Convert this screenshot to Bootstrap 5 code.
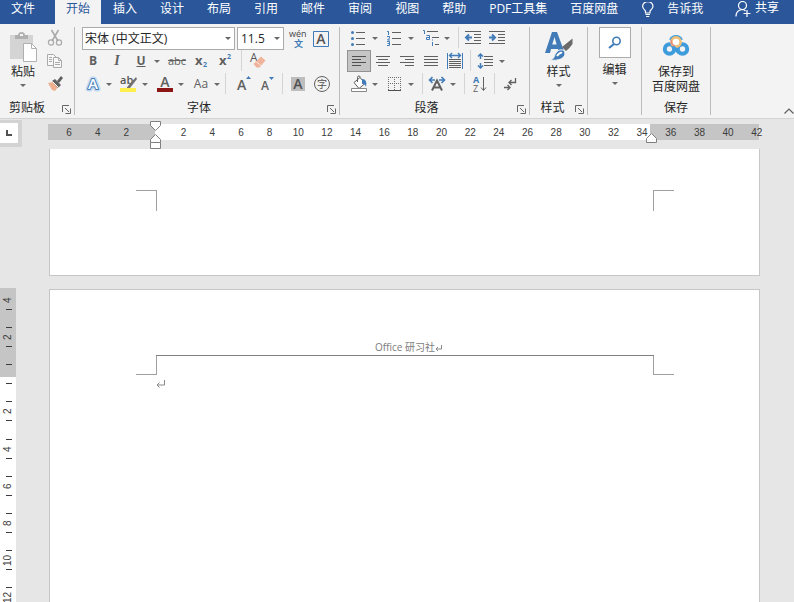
<!DOCTYPE html>
<html lang="zh-CN">
<head>
<meta charset="utf-8">
<meta name="viewport" content="width=device-width, initial-scale=1">
<title>Office 研习社</title>
<link href="https://cdn.jsdelivr.net/npm/bootstrap@5.3.0/dist/css/bootstrap.min.css" rel="stylesheet">
<style>
  :root { --ink:#606060; --blue:#2b579a; --accent:#417cb8; --line:#c6c6c6; }
  body { font-family:"Open Sans","Noto Sans CJK SC",sans-serif; font-size:12px; line-height:14px; color:#262626; background:#e6e6e6; }
  button { border:0; padding:0; background:none; color:inherit; }
  svg { display:block; flex:none; }
  .tabs { background:var(--blue); height:24px; }
  .tabs .nav-link { color:#fff; padding:2px 11px 8px; font-size:12px; line-height:14px; border-radius:0; }
  .tabs .nav-link.active { background:#f3f3f3; color:var(--blue); }
  .tabs .nav { gap:1px; }
  .tabs .first-tab { margin-right:8px; }
  .share { padding:1px 15px 9px 0; }
  .ribbon { background:#f3f3f3; height:95px; padding-top:3px; border-bottom:1px solid #d2d2d2; }
  .grp { height:88px; border-right:1px solid #bcbcbc; }
  .w-clip { width:75px; } .w-font { width:265px; } .w-para { width:190px; } .w-style { width:58px; } .w-edit { width:54px; } .w-save { width:69px; }
  .grp-foot { height:19px; }
  .launch { margin-right:3px; padding-bottom:1px; }
  .rows { padding-left:7px; }
  .w-font .rows { padding-left:6px; }
  .trow { height:23px; }
  .combos { padding-left:1px; }
  .tb { width:24px; height:22px; display:flex; align-items:center; justify-content:center; color:var(--ink); font-size:12px; line-height:20px; }
  .tb.on { background:#c5c5c5; outline:1px solid #929292; outline-offset:-1px; }
  .tb.ital { font-family:"Liberation Serif",serif; font-size:14px; }
  .tb.strike { font-size:11px; }
  .dd { width:8px; height:22px; display:flex; align-items:center; justify-content:center; }
  .dd::after, .tall .arrow { content:""; border:3px solid transparent; border-top-color:#6a6a6a; border-bottom:0; }
  .g4 { margin-right:4px; }
  .tsep { width:1px; height:21px; background:#d4d4d4; margin:0 2px 0 7px; }
  .tsep.tight { margin:0 3px; }
  .tsep.mid { margin:0 5px 0 4px; }
  .form-select.combo { height:23px; border:1px solid #ababab; border-radius:0; padding:0 14px 0 2px; font-size:12px; line-height:20px; color:#262626; background-color:#fff; background-position:right 3px center; background-size:6px 3px;
    background-image:url("data:image/svg+xml,%3csvg xmlns='http://www.w3.org/2000/svg' viewBox='0 0 6 3'%3e%3cpath fill='%23666' d='M0 0h6L3 3z'/%3e%3c/svg%3e"); }
  .form-select.face { width:153px; }
  .form-select.points { width:47px; margin-left:2px; padding-left:3px; }
  .tall { display:flex; flex-direction:column; align-items:center; line-height:15px; }
  .tall .arrow { margin-top:5px; }
  .paste { padding-left:9px; margin-right:7px; }
  .find-box { width:32px; height:31px; background:#fff; border:1px solid #ababab; display:flex; align-items:center; justify-content:center; }
  .ruler-row { height:30px; padding:5px 35px 0 0; }
  .tabstop { width:22px; height:27px; margin-right:26px; margin-top:-4px; background:#fff; border:4px solid #d3d3d3; border-left:0; border-top-width:3px; }
  .hruler { height:16px; padding:0 2px 0 21px; background:linear-gradient(90deg,#c5c5c5 15%,#fff 15% 84.7%,#c5c5c5 84.7%); font:10px/17px "Liberation Sans",sans-serif; color:#3c3c3c; }
  .hruler > span { width:0; display:flex; justify-content:center; }
  .mk { position:absolute; top:-3px; }
  .mk-l { left:calc(15% - 5px); }
  .mk-r { left:calc(84.7% - 4px); }
  .vruler { width:16px; margin-top:139px; margin-right:33px; padding:12px 0 5px; background:linear-gradient(#c5c5c5 28.3%,#fff 28.3%); font:10px/10px "Liberation Sans",sans-serif; color:#3c3c3c; }
  .vruler > span { height:0; display:flex; flex-direction:column; align-items:center; justify-content:center; }
  .vruler > span::before, .vruler > span::after { content:""; width:6px; height:1px; margin-left:2px; background:#3c3c3c; flex:none; }
  .vruler > span:first-child::before { background:none; }
  .vruler b { height:18px; font-weight:400; writing-mode:vertical-rl; transform:rotate(180deg); text-align:center; flex:none; line-height:12px; }
  .pages { margin-right:34px; }
  .sheet { background:#fff; border:1px solid var(--line); padding:0 85px 0 86px; }
  .sheet.one { border-top:0; height:127px; padding-top:41px; margin-bottom:13px; }
  .sheet.two { border-bottom:0; padding-top:50px; }
  .corner { width:21px; height:21px; border:0 solid #a0a0a0; }
  .sheet.two .corner { height:19px; }
  .c-tl { border-width:1px 1px 0 0; } .c-tr { border-width:1px 0 0 1px; }
  .c-bl { border-width:0 1px 1px 0; } .c-br { border-width:0 0 1px 1px; }
  .pghead { margin:0 20px; padding-left:7px; border-bottom:1px solid #808080; height:16px; font-size:10px; line-height:14px; color:#7c7c7c; }
  .para { padding:2px 0 0 20px; }
</style>
<script src="https://cdn.jsdelivr.net/npm/bootstrap@5.3.0/dist/js/bootstrap.bundle.min.js"></script>
</head>
<body class="vh-100 overflow-hidden d-flex flex-column">

<header class="tabs d-flex align-items-start flex-shrink-0">
  <nav class="nav flex-nowrap text-nowrap">
    <a class="nav-link first-tab" href="#">文件</a>
    <a class="nav-link active" href="#" aria-current="page">开始</a>
    <a class="nav-link" href="#">插入</a>
    <a class="nav-link" href="#">设计</a>
    <a class="nav-link" href="#">布局</a>
    <a class="nav-link" href="#">引用</a>
    <a class="nav-link" href="#">邮件</a>
    <a class="nav-link" href="#">审阅</a>
    <a class="nav-link" href="#">视图</a>
    <a class="nav-link" href="#">帮助</a>
    <a class="nav-link" href="#">PDF工具集</a>
    <a class="nav-link" href="#">百度网盘</a>
    <a class="nav-link d-flex" href="#">
      <svg width="14" height="18" viewBox="0 0 14 18" fill="none" stroke="#fff" stroke-width="1.200"><path d="M4.500 11V9C3 7.500 1.600 6.500 1.600 4.300a5.200 4.700 0 0 1 10.400 0c0 2.200-1.500 3.200-3 4.700v2zM4.500 12.500h4.500M5.200 14.500h3"/></svg>
      <span class="ms-2 ps-1">告诉我</span>
    </a>
  </nav>
  <button type="button" class="share ms-auto d-flex text-white text-nowrap">
    <svg width="16" height="16" viewBox="0 0 16 16" fill="none" stroke="#fff" stroke-width="1.200" class="me-1"><circle cx="7.500" cy="4.500" r="4"/><path d="M1 15.500c0-4 2.500-6.500 6-7 1.500 0 2.500.5 3.500 1.500M12 9v7M8.500 12.500h7"/></svg>
    <span>共享</span>
  </button>
</header>

<section class="ribbon d-flex flex-shrink-0" aria-label="开始">
  <div class="grp w-clip d-flex flex-column">
    <div class="d-flex flex-grow-1">
      <button type="button" class="tall paste pt-1">
        <svg width="28" height="33" viewBox="0 0 28 33"><path d="M1 4h23v24H1z" fill="#d4d4d4"/><path d="M6 8V4h3c0-4 7-4 7 0h3v4z" fill="#b0b0b0"/><path d="M11 3h3v2h-3z" fill="#f3f3f3"/><path d="M14.500 12.500h8l5 5V30.500h-13z" fill="#fff" stroke="#b0b0b0"/><path d="M22.500 12.500v5h5" fill="none" stroke="#b0b0b0"/></svg>
        <span>粘贴</span><span class="arrow"></span>
      </button>
      <div>
        <div class="trow"><button type="button" class="tb" aria-label="剪切"><svg width="24" height="22" viewBox="0 0 24 22" fill="none" stroke="#aaa" stroke-width="1.600"><path d="M7.500 3l6.500 11M14.500 3L8 14"/><circle cx="7" cy="15.500" r="2.600" stroke-width="1.200"/><circle cx="15" cy="15.500" r="2.600" stroke-width="1.200"/></svg></button></div>
        <div class="trow"><button type="button" class="tb" aria-label="复制"><svg width="24" height="22" viewBox="0 0 24 22" fill="#f8f8f8" stroke="#aaa"><path d="M3.500 4.500h6l3 3v8h-9zM5 7.500h3M5 9.500h3M5 11.500h3"/><path d="M9.500 7.500h5l3 3v7h-8zM14.500 7.500v3h3M11 12.500h5M11 14.500h5"/></svg></button></div>
        <div class="trow"><button type="button" class="tb" aria-label="格式刷"><svg width="24" height="22" viewBox="0 0 24 22"><path d="M4 10l5-1 5 5-3 4-3-1z" fill="#efaf91"/><path d="M8 8l3-2 6 6-3 3z" fill="#606060"/><path d="M13 8l4-5 2 2-4 5z" fill="#606060"/><path d="M8.500 8.500l6 6" stroke="#fff"/></svg></button></div>
      </div>
    </div>
    <div class="grp-foot d-flex align-items-end"><span class="flex-grow-1 text-center pe-2">剪贴板</span>
      <button type="button" class="launch" aria-label="剪贴板选项"><svg width="9" height="9" viewBox="0 0 9 9" fill="none" stroke="#666"><path d="M.5 7V.5H7M3 3l4 4M8.500 3.500v5h-5"/></svg></button></div>
  </div>

  <div class="grp w-font d-flex flex-column">
    <div class="rows">
      <div class="trow combos d-flex align-items-center">
        <select class="form-select combo face" aria-label="字体"><option>宋体 (中文正文)</option></select>
        <select class="form-select combo points" aria-label="字号"><option>11.5</option></select>
        <button type="button" class="tb" aria-label="拼音指南"><svg width="24" height="22" viewBox="0 0 24 22"><text x="5" y="9" font-size="9" font-family="Open Sans" fill="#444">wén</text><text x="10" y="19" font-size="9" font-family="Noto Sans CJK SC" font-weight="700" fill="#417cb8">文</text></svg></button>
        <button type="button" class="tb" aria-label="字符边框"><svg width="24" height="22" viewBox="0 0 24 22"><path d="M5.500 3.500h15v15h-15z" fill="none" stroke="#417cb8"/><text x="13" y="16" text-anchor="middle" font-size="14" font-weight="600" font-family="Open Sans" fill="#555">A</text></svg></button>
      </div>
      <div class="trow d-flex">
        <button type="button" class="tb fw-bold">B</button>
        <button type="button" class="tb ital fst-italic fw-bold">I</button>
        <button type="button" class="tb fw-bold text-decoration-underline">U</button><button type="button" class="dd g4" aria-label="下划线类型"></button>
        <button type="button" class="tb strike text-decoration-line-through">abc</button>
        <button type="button" class="tb" aria-label="下标"><svg width="24" height="22" viewBox="0 0 24 22" font-family="Open Sans" font-weight="700"><text x="6" y="15" font-size="13" fill="#606060">x</text><text x="14" y="17" font-size="7" fill="#417cb8">2</text></svg></button>
        <button type="button" class="tb" aria-label="上标"><svg width="24" height="22" viewBox="0 0 24 22" font-family="Open Sans" font-weight="700"><text x="6" y="15" font-size="13" fill="#606060">x</text><text x="14" y="9" font-size="7" fill="#417cb8">2</text></svg></button>
        <span class="tsep mid"></span>
        <button type="button" class="tb" aria-label="清除格式"><svg width="24" height="22" viewBox="0 0 24 22"><text x="3" y="12" font-size="12" font-family="Open Sans" fill="#555">A</text><path d="M14 6.500l4.500 4-6 7h-3L6.500 14z" fill="#f0b39a"/><path d="M9 11.500l5 4" stroke="#fbe3d8"/></svg></button>
      </div>
      <div class="trow d-flex">
        <button type="button" class="tb" aria-label="文本效果"><svg width="24" height="22" viewBox="0 0 24 22" font-family="Open Sans" font-size="15" font-weight="600" stroke-linejoin="round"><text x="12" y="16" text-anchor="middle" fill="#417cb8" stroke="#c3daf2" stroke-width="5">A</text><text x="12" y="16" text-anchor="middle" fill="#417cb8" stroke="#417cb8" stroke-width="2">A</text><text x="12" y="16" text-anchor="middle" fill="#fff">A</text></svg></button><button type="button" class="dd g4" aria-label="更多文本效果"></button>
        <button type="button" class="tb" aria-label="突出显示"><svg width="24" height="22" viewBox="0 0 24 22"><text x="3" y="11" font-size="11" font-weight="600" font-family="Open Sans" fill="#555">ab</text><path d="M19 4l-8 9-2 3 4-1 7-9z" fill="#707070"/><path d="M3 15h16v4H3z" fill="#fff04b"/></svg></button><button type="button" class="dd g4" aria-label="突出显示颜色"></button>
        <button type="button" class="tb" aria-label="字体颜色"><svg width="24" height="22" viewBox="0 0 24 22"><text x="12" y="14" text-anchor="middle" font-size="14" font-weight="600" font-family="Open Sans" fill="#606060">A</text><path d="M4 15h16v4H4z" fill="#8c1515"/></svg></button><button type="button" class="dd g4" aria-label="更多字体颜色"></button>
        <button type="button" class="tb">Aa</button><button type="button" class="dd" aria-label="更改大小写"></button>
        <span class="tsep mid"></span>
        <button type="button" class="tb" aria-label="增大字号"><svg width="24" height="22" viewBox="0 0 24 22"><text x="6" y="17" font-size="14" font-weight="600" font-family="Open Sans" fill="#606060">A</text><path d="M15 6l2.500-3L20 6z" fill="#417cb8"/></svg></button>
        <button type="button" class="tb" aria-label="减小字号"><svg width="24" height="22" viewBox="0 0 24 22"><text x="6" y="17" font-size="12" font-weight="600" font-family="Open Sans" fill="#606060">A</text><path d="M14 4h5l-2.500 3z" fill="#417cb8"/></svg></button>
        <span class="tsep tight"></span>
        <button type="button" class="tb" aria-label="字符底纹"><svg width="24" height="22" viewBox="0 0 24 22"><path d="M5 4h14v14H5z" fill="#bdbdbd"/><text x="12" y="16" text-anchor="middle" font-size="14" font-weight="600" font-family="Open Sans" fill="#505050">A</text></svg></button>
        <button type="button" class="tb" aria-label="带圈字符"><svg width="24" height="22" viewBox="0 0 24 22"><circle cx="12" cy="11" r="7.500" fill="none" stroke="#606060"/><text x="12" y="15" text-anchor="middle" font-size="10" font-family="Noto Sans CJK SC" fill="#505050">字</text></svg></button>
      </div>
    </div>
    <div class="grp-foot d-flex align-items-end"><span class="flex-grow-1 text-center ps-1 pe-2">字体</span>
      <button type="button" class="launch" aria-label="字体选项"><svg width="9" height="9" viewBox="0 0 9 9" fill="none" stroke="#666"><path d="M.5 7V.5H7M3 3l4 4M8.500 3.500v5h-5"/></svg></button></div>
  </div>

  <div class="grp w-para d-flex flex-column">
    <div class="rows">
      <div class="trow d-flex">
        <button type="button" class="tb" aria-label="项目符号"><svg width="24" height="22" viewBox="0 0 24 22"><path d="M9 5.500h9M9 11.500h9M9 17.500h9" stroke="#606060"/><g fill="#417cb8"><circle cx="5.500" cy="5.500" r="1.500"/><circle cx="5.500" cy="11.500" r="1.500"/><circle cx="5.500" cy="17.500" r="1.500"/></g></svg></button><button type="button" class="dd g4" aria-label="项目符号库"></button>
        <button type="button" class="tb" aria-label="编号"><svg width="24" height="22" viewBox="0 0 24 22"><path d="M9 5.500h9M9 11.500h9M9 17.500h9" stroke="#606060"/><g fill="none" stroke="#417cb8"><path d="M4 4.500h1.500V8M4 9.500h2.500v1.500l-2 2h2.500M4 14.500h2.500v4H4M4.500 16.500h2"/></g></svg></button><button type="button" class="dd g4" aria-label="编号库"></button>
        <button type="button" class="tb" aria-label="多级列表"><svg width="24" height="22" viewBox="0 0 24 22"><path d="M8 4.500h11M13 10.500h7M16 17.500h4" stroke="#606060"/><path d="M4 3.500h1.500V7M7.500 8.500h3v4h-3v-2h3M13.500 15v4M13.500 12.500v1" fill="none" stroke="#417cb8"/></svg></button><button type="button" class="dd" aria-label="多级列表库"></button>
        <span class="tsep"></span>
        <button type="button" class="tb" aria-label="减少缩进"><svg width="24" height="22" viewBox="0 0 24 22" fill="none"><path d="M4 4.500h16M13 7.500h7M13 10.500h7M13 13.500h7M4 16.500h16" stroke="#606060"/><path d="M11 10.500H5M8 7.500l-3 3 3 3" stroke="#417cb8" stroke-width="2"/></svg></button>
        <button type="button" class="tb" aria-label="增加缩进"><svg width="24" height="22" viewBox="0 0 24 22" fill="none"><path d="M4 4.500h16M13 7.500h7M13 10.500h7M13 13.500h7M4 16.500h16" stroke="#606060"/><path d="M4 10.500h6M7 7.500l3 3-3 3" stroke="#417cb8" stroke-width="2"/></svg></button>
      </div>
      <div class="trow d-flex">
        <button type="button" class="tb on" aria-label="左对齐" aria-pressed="true"><svg width="24" height="22" viewBox="0 0 24 22"><path d="M5 6.500h14M5 9.500h9M5 12.500h14M5 15.500h9" stroke="#505050"/></svg></button>
        <button type="button" class="tb" aria-label="居中"><svg width="24" height="22" viewBox="0 0 24 22"><path d="M5 6.500h14M7 9.500h10M5 12.500h14M7 15.500h10" stroke="#606060"/></svg></button>
        <button type="button" class="tb" aria-label="右对齐"><svg width="24" height="22" viewBox="0 0 24 22"><path d="M5 6.500h14M10 9.500h9M5 12.500h14M10 15.500h9" stroke="#606060"/></svg></button>
        <button type="button" class="tb" aria-label="两端对齐"><svg width="24" height="22" viewBox="0 0 24 22"><path d="M5 6.500h14M5 9.500h14M5 12.500h14M5 15.500h14" stroke="#606060"/></svg></button>
        <button type="button" class="tb" aria-label="分散对齐"><svg width="24" height="22" viewBox="0 0 24 22" fill="none"><path d="M6 9.500h12M6 11.500h12M6 13.500h12M6 15.500h12M6 17.500h12" stroke="#606060"/><path d="M4.500 3v16M19.500 3v16" stroke="#417cb8"/><path d="M7 5.500h10M9 3L6.500 5.500 9 8M15 3l2.500 2.500L15 8" stroke="#417cb8" stroke-width="1.400"/></svg></button>
        <span class="tsep tight"></span>
        <button type="button" class="tb" aria-label="行距"><svg width="24" height="22" viewBox="0 0 24 22" fill="none"><path d="M10 6.500h9M10 9.500h9M10 12.500h9M10 15.500h9" stroke="#606060"/><path d="M6.500 4v5M6.500 13v5M4 6.500L6.500 4 9 6.500M4 15.500L6.500 18 9 15.500" stroke="#417cb8" stroke-width="1.500"/></svg></button><button type="button" class="dd" aria-label="行距选项"></button>
      </div>
      <div class="trow d-flex">
        <button type="button" class="tb" aria-label="底纹"><svg width="24" height="22" viewBox="0 0 24 22"><path d="M7 9.500l6-5 5 6-6 5z" fill="#fff" stroke="#606060"/><path d="M10.500 9V4.500q0-2 2-1.500l1 1.500" fill="none" stroke="#606060"/><path d="M15 6c4 0 5 3 4 8-1-3-2-3-4-3z" fill="#417cb8"/><path d="M4.500 15.500h15v3h-15z" fill="#fff" stroke="#888"/></svg></button><button type="button" class="dd g4" aria-label="底纹颜色"></button>
        <button type="button" class="tb" aria-label="边框"><svg width="24" height="22" viewBox="0 0 24 22"><path d="M5.500 4v14M11.500 4v14M17.500 4v14M5 4.500h14M5 10.500h14" fill="none" stroke="#707070" stroke-dasharray="1 1"/><path d="M5 17.500h13" stroke="#505050"/></svg></button><button type="button" class="dd" aria-label="边框选项"></button>
        <span class="tsep"></span>
        <button type="button" class="tb" aria-label="中文版式"><svg width="24" height="22" viewBox="0 0 24 22" fill="none"><path d="M7 17.500l5-10 5 10M9 14.500h6" stroke="#606060" stroke-width="2"/><path d="M4.500 7H10M7.500 4l-3 3 3 3M14 7h5.500M16.500 4l3 3-3 3" stroke="#417cb8" stroke-width="1.600"/></svg></button><button type="button" class="dd" aria-label="中文版式选项"></button>
        <span class="tsep"></span>
        <button type="button" class="tb" aria-label="排序"><svg width="24" height="22" viewBox="0 0 24 22" font-family="Open Sans" font-size="9"><text x="6" y="10" font-weight="700" fill="#417cb8">A</text><text x="6" y="19" fill="#606060">Z</text><path d="M16.500 4v13M14 14.500l2.500 3 2.500-3" fill="none" stroke="#606060"/></svg></button>
        <span class="tsep tight"></span>
        <button type="button" class="tb" aria-label="显示编辑标记"><svg width="24" height="22" viewBox="0 0 24 22" fill="none" stroke="#606060" stroke-width="1.300"><path d="M17.500 5v4.500H11M13.500 7L11 9.500l2.500 2.500M6 14.500h6M9.500 12l2.500 2.500L9.500 17"/></svg></button>
      </div>
    </div>
    <div class="grp-foot d-flex align-items-end"><span class="flex-grow-1 text-center pe-1">段落</span>
      <button type="button" class="launch" aria-label="段落选项"><svg width="9" height="9" viewBox="0 0 9 9" fill="none" stroke="#666"><path d="M.5 7V.5H7M3 3l4 4M8.500 3.500v5h-5"/></svg></button></div>
  </div>

  <div class="grp w-style d-flex flex-column">
    <button type="button" class="tall flex-grow-1 pt-1">
      <svg width="30" height="33" viewBox="0 0 30 33"><path d="M1 22L8 1h5l7 19-3 3-2-1-1-4H7l-1 4zM8.200 13.500h4.400L10.500 6z" fill="#417cb8"/><path d="M28.500 7.500L18 16l4 4q4-3 6.500-7z" fill="#6a6a6a"/><path d="M16 19q5-1 5 4c-1 5-7 7-15 6 5-1 4-5 6-7 1-2 3-3 4-3z" fill="#417cb8" stroke="#f3f3f3"/><path d="M13 25q3-4 5-3" fill="none" stroke="#fff" stroke-width="2"/></svg>
      <span>样式</span><span class="arrow"></span>
    </button>
    <div class="grp-foot d-flex align-items-end"><span class="flex-grow-1 text-center">样式</span>
      <button type="button" class="launch" aria-label="样式选项"><svg width="9" height="9" viewBox="0 0 9 9" fill="none" stroke="#666"><path d="M.5 7V.5H7M3 3l4 4M8.500 3.500v5h-5"/></svg></button></div>
  </div>

  <div class="grp w-edit">
    <button type="button" class="tall w-100 mt-0">
      <span class="find-box mt-0 mb-1"><svg width="14" height="14" viewBox="0 0 14 14" fill="none" stroke="#417cb8"><circle cx="8.500" cy="5" r="3.700" stroke-width="1.600"/><path d="M6 8l-5 4" stroke-width="2.200"/></svg></span>
      <span>编辑</span><span class="arrow"></span>
    </button>
  </div>

  <div class="grp w-save d-flex flex-column">
    <button type="button" class="tall flex-grow-1 pt-1">
      <svg width="28" height="33" viewBox="0 0 28 33" fill="none"><path d="M8.500 9a6 6 0 0 1 11 0" stroke="#3e9bdc" stroke-width="3"/><g stroke="#3e9bdc" stroke-width="4"><circle cx="7.500" cy="18" r="4.700"/><circle cx="20.500" cy="18" r="4.700"/></g><circle cx="14" cy="11" r="4.600" fill="#fff" stroke="#efc078" stroke-width="2.600"/><path d="M10.500 15.500l6.500 6" stroke="#3e9bdc" stroke-width="3.500"/><path d="M9.500 9q-1 4 3 6" stroke="#e58a83" stroke-width="1.500"/></svg>
      <span>保存到</span><span>百度网盘</span>
    </button>
    <div class="grp-foot d-flex align-items-end"><span class="flex-grow-1 text-center">保存</span></div>
  </div>
  <button type="button" class="ms-auto align-self-end pb-1" aria-label="折叠功能区"><svg width="10" height="6" viewBox="0 0 10 6" fill="none" stroke="#606060" stroke-width="1.200"><path d="M.5 5.500L5 1l4.500 4.500"/></svg></button>
</section>

<div class="ruler-row d-flex flex-shrink-0">
  <button type="button" class="tabstop d-flex align-items-center justify-content-center flex-shrink-0" aria-label="制表符"><svg width="6" height="6" viewBox="0 0 6 6"><path d="M1 0v5h5" fill="none" stroke="#505050" stroke-width="2"/></svg></button>
  <div class="hruler flex-grow-1 d-flex justify-content-between position-relative">
    <span>6</span><span>4</span><span>2</span><span></span><span>2</span><span>4</span><span>6</span><span>8</span><span>10</span><span>12</span><span>14</span><span>16</span><span>18</span><span>20</span><span>22</span><span>24</span><span>26</span><span>28</span><span>30</span><span>32</span><span>34</span><span>36</span><span>38</span><span>40</span><span>42</span>
    <svg class="mk mk-l" width="11" height="28" viewBox="0 0 11 28" fill="#fff" stroke="#808080"><path d="M.5.5h10v4l-5 5-5-5zM5.500 13.500l5 5v3H.5v-3zM.5 21.500h10v6H.5z"/></svg>
    <svg class="mk mk-r" width="11" height="28" viewBox="0 0 11 28" fill="#fff" stroke="#808080"><path d="M5.500 12.500l5 5v4H.5v-4z"/></svg>
  </div>
</div>

<main class="d-flex flex-grow-1 overflow-hidden">
  <div class="vruler d-flex flex-column justify-content-between flex-shrink-0">
    <span><b>4</b></span><span><b>2</b></span><span><b></b></span><span><b>2</b></span><span><b>4</b></span><span><b>6</b></span><span><b>8</b></span><span><b>10</b></span><span><b>12</b></span>
  </div>
  <div class="pages flex-grow-1 d-flex flex-column">
    <article class="sheet one d-flex justify-content-between">
      <span class="corner c-tl"></span><span class="corner c-tr"></span>
    </article>
    <article class="sheet two flex-grow-1">
      <header class="pghead d-flex justify-content-center"><span>Office 研习社</span>
        <svg width="7" height="14" viewBox="0 0 7 14" fill="none" stroke="#888"><path d="M6.500 5v4H1M3 7L1 9l2 2"/></svg></header>
      <div class="d-flex justify-content-between"><span class="corner c-bl"></span><span class="corner c-br"></span></div>
      <p class="para m-0"><svg width="9" height="14" viewBox="0 0 9 14" fill="none" stroke="#888"><path d="M8.500 3v5H1M3.500 5.500L1 8l2.500 2.500"/></svg></p>
    </article>
  </div>
</main>
</body>
</html>
